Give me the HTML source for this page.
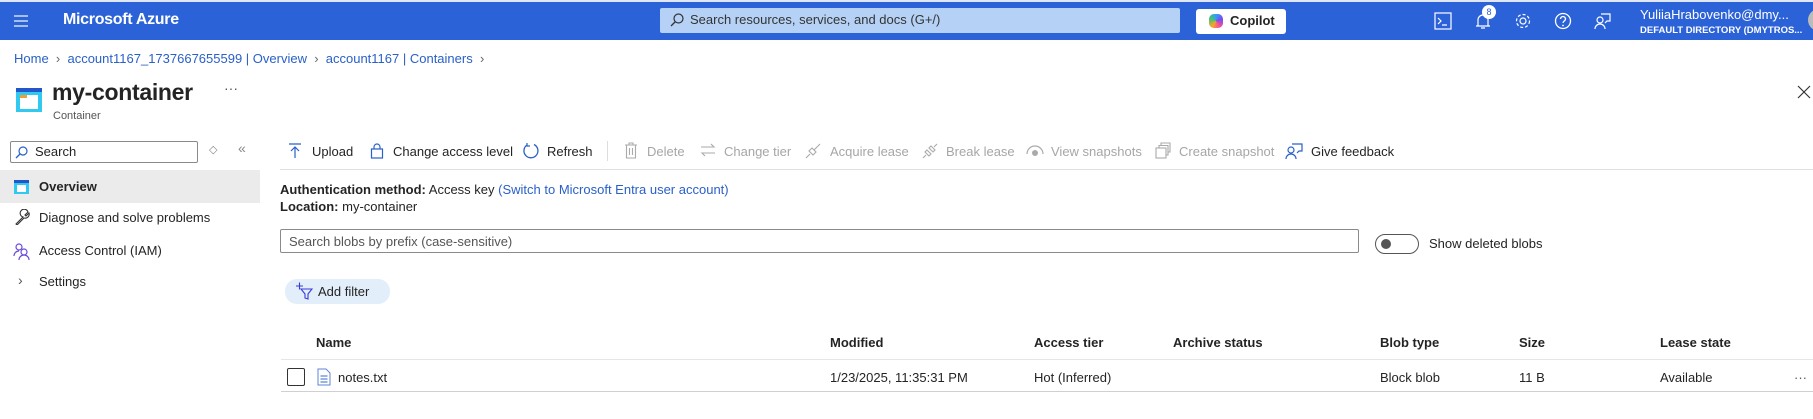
<!DOCTYPE html>
<html><head><meta charset="utf-8"><style>
*{box-sizing:border-box;margin:0;padding:0}
body{width:1813px;height:419px;overflow:hidden;background:#fff;font-family:"Liberation Sans",sans-serif;font-size:13px;color:#242424;position:relative}
.a{position:absolute;white-space:nowrap}
.hdr{position:absolute;left:0;top:0;width:1813px;height:40px;background:#2c62d7;border-top:2px solid #dfe6f5}
.w{color:#fff}
.blue{color:#2a60c8}
.dis{color:#a6a6a6}
.tb svg{position:absolute}
</style></head><body>
<div class="hdr"></div>
<svg class="a" style="left:13px;top:14px" width="16" height="14"><path d="M1 2h14M1 7h14M1 12h14" stroke="#cfdcf5" stroke-width="1.5"/></svg>
<div class="a w" style="left:63px;top:11px;font-size:16px;font-weight:bold;letter-spacing:-0.3px">Microsoft Azure</div>
<div class="a" style="left:660px;top:8px;width:520px;height:25px;background:#b5d2f6;border-radius:2px"></div>
<svg class="a" style="left:670px;top:13px" width="14" height="14"><circle cx="8.5" cy="5.5" r="4.5" fill="none" stroke="#333" stroke-width="1.2"/><path d="M5 9L1 13" stroke="#333" stroke-width="1.3"/></svg>
<div class="a" style="left:690px;top:12px;color:#333;font-size:13px">Search resources, services, and docs (G+/)</div>
<div class="a" style="left:1196px;top:9px;width:90px;height:25px;background:#fff;border-radius:3px"></div>
<div class="a" style="left:1209px;top:14px;width:14px;height:14px;border-radius:5px;background:conic-gradient(#2ea0f5,#7a4cf0,#f0509b,#f7a52b,#4bc46c,#2ea0f5)"></div>
<div class="a" style="left:1230px;top:13px;font-size:13px;font-weight:bold;color:#242424">Copilot</div>
<svg class="a" style="left:1434px;top:12px" width="18" height="18"><rect x="1" y="1" width="16" height="16" fill="none" stroke="#fff" stroke-width="1.2"/><path d="M4 6l3 3-3 3M8 13h5" stroke="#fff" stroke-width="1.2" fill="none"/></svg>
<svg class="a" style="left:1474px;top:11px" width="18" height="20"><path d="M4 15V9a5 5 0 0110 0v6h2H2zM7 17h4" stroke="#fff" stroke-width="1.2" fill="none"/></svg>
<div class="a" style="left:1482px;top:5px;width:14px;height:14px;border-radius:7px;background:#fff;color:#2c62d7;font-size:9px;text-align:center;line-height:14px">8</div>
<svg class="a" style="left:1514px;top:12px" width="18" height="18"><circle cx="9" cy="9" r="3" fill="none" stroke="#fff" stroke-width="1.2"/><circle cx="9" cy="9" r="6.5" fill="none" stroke="#fff" stroke-width="1.2" stroke-dasharray="3 2"/></svg>
<svg class="a" style="left:1554px;top:12px" width="18" height="18"><circle cx="9" cy="9" r="7.5" fill="none" stroke="#fff" stroke-width="1.3"/><path d="M6.5 7a2.5 2.5 0 115 0c0 2-2.5 2-2.5 4" stroke="#fff" stroke-width="1.3" fill="none"/><circle cx="9" cy="13.5" r=".9" fill="#fff"/></svg>
<svg class="a" style="left:1593px;top:11px" width="20" height="20"><circle cx="7" cy="9" r="3" fill="none" stroke="#fff" stroke-width="1.2"/><path d="M2 18a5 5 0 0110 0M8 3h9v7h-3l-2 2" stroke="#fff" stroke-width="1.2" fill="none"/></svg>
<div class="a w" style="left:1640px;top:7px;font-size:13px">YuliiaHrabovenko@dmy...</div>
<div class="a w" style="left:1640px;top:25px;font-size:9.5px;font-weight:bold">DEFAULT DIRECTORY (DMYTROS...</div>
<div class="a" style="left:1808px;top:9px;width:22px;height:22px;border-radius:11px;background:#bbb"></div>

<div class="a blue" style="left:14px;top:51px;font-size:13px">Home &nbsp;<span style="color:#666">›</span>&nbsp; account1167_1737667655599 | Overview &nbsp;<span style="color:#666">›</span>&nbsp; account1167 | Containers &nbsp;<span style="color:#666">›</span></div>
<svg class="a" style="left:16px;top:88px" width="26" height="24"><rect x="0" y="0" width="26" height="24" fill="#32c9f0"/><rect x="0" y="0" width="26" height="4" fill="#2356c8"/><rect x="4" y="7" width="18" height="14" fill="#fff"/><rect x="4" y="7" width="7" height="3" fill="#f0a030"/></svg>
<div class="a" style="left:52px;top:79px;font-size:23px;font-weight:bold;letter-spacing:-0.3px">my-container</div>
<div class="a" style="left:224px;top:80px;font-size:14px;color:#555">···</div>
<div class="a" style="left:53px;top:110px;font-size:11px;color:#555">Container</div>
<svg class="a" style="left:1797px;top:85px" width="14" height="14"><path d="M1 1l12 12M13 1L1 13" stroke="#333" stroke-width="1.2"/></svg>

<div class="a" style="left:10px;top:141px;width:188px;height:22px;border:1px solid #8a8a8a;border-radius:2px"></div>
<svg class="a" style="left:15px;top:146px" width="13" height="13"><circle cx="8" cy="5" r="4" fill="none" stroke="#2a60c8" stroke-width="1.2"/><path d="M5 8L1 12" stroke="#2a60c8" stroke-width="1.3"/></svg>
<div class="a" style="left:35px;top:144px">Search</div>
<div class="a" style="left:209px;top:143px;color:#888;font-size:11px">◇</div>
<div class="a" style="left:238px;top:140px;color:#888;font-size:14px">«</div>
<div class="a" style="left:0;top:170px;width:260px;height:33px;background:#ebebeb"></div>
<svg class="a" style="left:14px;top:180px" width="15" height="14"><rect width="15" height="14" fill="#32c9f0"/><rect width="15" height="3" fill="#2356c8"/><rect x="3" y="5" width="9" height="7" fill="#fff"/></svg>
<div class="a" style="left:39px;top:179px;font-weight:bold">Overview</div>
<svg class="a" style="left:14px;top:209px" width="16" height="16"><path d="M2 15l7-7a4 4 0 115-5l-3 3 1 1 3-3a4 4 0 01-5 5l-7 7z" fill="none" stroke="#333" stroke-width="1.1"/></svg>
<div class="a" style="left:39px;top:210px">Diagnose and solve problems</div>
<svg class="a" style="left:13px;top:242px" width="18" height="18"><circle cx="6" cy="5" r="3" fill="none" stroke="#6b4bd8" stroke-width="1.2"/><circle cx="11" cy="10" r="3" fill="none" stroke="#6b4bd8" stroke-width="1.2"/><path d="M1 14a5 5 0 015-5M6 18a5 5 0 0110 0" stroke="#6b4bd8" stroke-width="1.2" fill="none"/></svg>
<div class="a" style="left:39px;top:243px">Access Control (IAM)</div>
<div class="a" style="left:18px;top:272px;color:#555;font-size:14px">›</div>
<div class="a" style="left:39px;top:274px">Settings</div>

<!-- toolbar -->
<div class="tb">
<svg style="left:288px;top:143px" width="14" height="16"><path d="M1 1h12M7 15V4M3 8l4-4 4 4" stroke="#2a60c8" stroke-width="1.2" fill="none"/></svg>
<div class="a" style="left:312px;top:144px">Upload</div>
<svg style="left:370px;top:142px" width="14" height="17"><rect x="1.5" y="7" width="11" height="9" fill="none" stroke="#2a60c8" stroke-width="1.2"/><path d="M4 7V5a3 3 0 016 0v2" fill="none" stroke="#2a60c8" stroke-width="1.2"/></svg>
<div class="a" style="left:393px;top:144px">Change access level</div>
<svg style="left:522px;top:142px" width="18" height="18"><path d="M12 2.5A7 7 0 115 3" fill="none" stroke="#2a60c8" stroke-width="1.3"/><path d="M5 1v3h3" fill="none" stroke="#2a60c8" stroke-width="1.2"/></svg>
<div class="a" style="left:547px;top:144px">Refresh</div>
<div class="a" style="left:607px;top:141px;width:1px;height:20px;background:#ddd"></div>
<svg style="left:624px;top:142px" width="14" height="17"><path d="M1 3h12M5 3V1h4v2M2.5 3v13h9V3M5.5 6v7M8.5 6v7" fill="none" stroke="#aaa" stroke-width="1.1"/></svg>
<div class="a dis" style="left:647px;top:144px">Delete</div>
<svg style="left:700px;top:143px" width="16" height="14"><path d="M1 4h13l-3-3M15 10H2l3 3" fill="none" stroke="#aaa" stroke-width="1.1"/></svg>
<div class="a dis" style="left:724px;top:144px">Change tier</div>
<svg style="left:804px;top:142px" width="18" height="18"><path d="M2 16l4-4M10 8l6-6M5 9l4 4 3-3-4-4z" fill="none" stroke="#aaa" stroke-width="1.1"/></svg>
<div class="a dis" style="left:830px;top:144px">Acquire lease</div>
<svg style="left:921px;top:142px" width="18" height="18"><path d="M2 16l3-3M13 5l3-3M4 10l4 4 2-2-4-4zM10 4l4 4-2 2-4-4z" fill="none" stroke="#aaa" stroke-width="1.1"/></svg>
<div class="a dis" style="left:946px;top:144px">Break lease</div>
<svg style="left:1026px;top:145px" width="18" height="12"><path d="M1 9a8 8 0 0116 0" fill="none" stroke="#aaa" stroke-width="1.2"/><circle cx="9" cy="8" r="3" fill="#aaa"/></svg>
<div class="a dis" style="left:1051px;top:144px">View snapshots</div>
<svg style="left:1155px;top:142px" width="16" height="17"><rect x="1" y="6" width="10" height="10" fill="none" stroke="#aaa" stroke-width="1.1"/><path d="M4 6V3.5h9V13h-2M6 3.5V1h9v9h-2" fill="none" stroke="#aaa" stroke-width="1.1"/></svg>
<div class="a dis" style="left:1179px;top:144px">Create snapshot</div>
<svg style="left:1285px;top:142px" width="18" height="18"><circle cx="6" cy="8" r="3" fill="none" stroke="#2a60c8" stroke-width="1.2"/><path d="M1 17a5 5 0 0110 0M7 2h10v7h-3l-2 2" fill="none" stroke="#2a60c8" stroke-width="1.2"/></svg>
<div class="a" style="left:1311px;top:144px">Give feedback</div>
</div>
<div class="a" style="left:280px;top:169px;width:1533px;height:1px;background:#e0e0e0"></div>

<div class="a" style="left:280px;top:182px"><b>Authentication method:</b> Access key <span class="blue">(Switch to Microsoft Entra user account)</span></div>
<div class="a" style="left:280px;top:199px"><b>Location:</b> my-container</div>
<div class="a" style="left:280px;top:229px;width:1079px;height:24px;border:1px solid #8a8a8a;border-radius:2px"></div>
<div class="a" style="left:289px;top:234px;color:#555">Search blobs by prefix (case-sensitive)</div>
<div class="a" style="left:1375px;top:234px;width:44px;height:20px;border:1px solid #555;border-radius:10px"></div>
<div class="a" style="left:1381px;top:239px;width:10px;height:10px;border-radius:5px;background:#555"></div>
<div class="a" style="left:1429px;top:236px">Show deleted blobs</div>

<div class="a" style="left:285px;top:279px;width:105px;height:25px;background:#e3eefb;border-radius:12px"></div>
<svg class="a" style="left:295px;top:282px" width="18" height="18"><path d="M1 4h7M4.5 0.5v7" stroke="#3a3ad8" stroke-width="1.1"/><path d="M6 7h11l-4 5v5l-3-1v-4z" fill="none" stroke="#3a3ad8" stroke-width="1.1"/></svg>
<div class="a" style="left:318px;top:284px">Add filter</div>

<div class="a" style="top:335px;left:0;width:1813px;font-weight:bold">
<span class="a" style="left:316px">Name</span><span class="a" style="left:830px">Modified</span><span class="a" style="left:1034px">Access tier</span><span class="a" style="left:1173px">Archive status</span><span class="a" style="left:1380px">Blob type</span><span class="a" style="left:1519px">Size</span><span class="a" style="left:1660px">Lease state</span>
</div>
<div class="a" style="left:281px;top:359px;width:1532px;height:1px;background:#e6e6e6"></div>
<div class="a" style="left:287px;top:368px;width:18px;height:18px;border:1px solid #333;border-radius:2px"></div>
<svg class="a" style="left:317px;top:368px" width="14" height="18"><path d="M1 1h8l4 4v12H1z" fill="#fff" stroke="#5c86d8" stroke-width="1"/><path d="M3.5 8h7M3.5 11h7M3.5 14h7" stroke="#5c86d8" stroke-width="1.2"/></svg>
<div class="a" style="top:370px;left:0;width:1813px">
<span class="a" style="left:338px">notes.txt</span><span class="a" style="left:830px">1/23/2025, 11:35:31 PM</span><span class="a" style="left:1034px">Hot (Inferred)</span><span class="a" style="left:1380px">Block blob</span><span class="a" style="left:1519px">11 B</span><span class="a" style="left:1660px">Available</span><span class="a" style="left:1794px;color:#555">···</span>
</div>
<div class="a" style="left:281px;top:391px;width:1532px;height:1px;background:#d0d0d0"></div>
</body></html>
